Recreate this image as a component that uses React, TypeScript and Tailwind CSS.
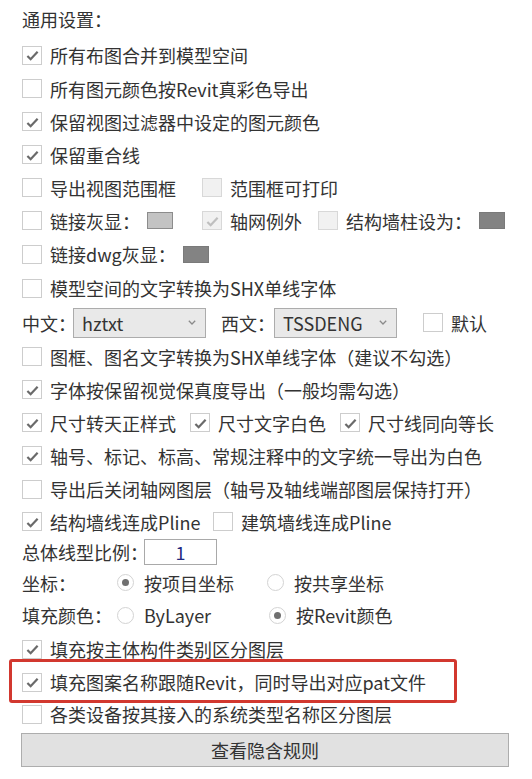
import clsx from 'clsx'
import type { ReactNode } from 'react'

const font = { fontFamily: '"Noto Sans CJK SC", "Noto Sans", sans-serif' }

function Box({ checked, disabled }: { checked?: boolean; disabled?: boolean }) {
    return (
        <span
            className={clsx(
                'flex h-[19px] w-[20px] shrink-0 items-center justify-center border',
                disabled ? 'border-[#d8d8d8] bg-[#f1f1f1]' : 'border-[#cdcdcd] bg-white',
            )}
        >
            {checked && (
                <svg viewBox="0 0 14 11" className="mt-px h-[11px] w-[13px]">
                    <path
                        d="M1.5 6 L5 9.5 L12.5 1.5"
                        fill="none"
                        stroke={disabled ? '#bfbfbf' : '#6a6a6a'}
                        strokeWidth="2.4"
                    />
                </svg>
            )}
        </span>
    )
}

function Check({
    label,
    checked,
    disabled,
    className,
    children,
}: {
    label: string
    checked?: boolean
    disabled?: boolean
    className?: string
    children?: ReactNode
}) {
    return (
        <div className={clsx('flex shrink-0 items-center', className)}>
            <Box checked={checked} disabled={disabled} />
            <span className="ml-[8px] whitespace-nowrap">{label}</span>
            {children}
        </div>
    )
}

function Radio({ label, checked, className }: { label: string; checked?: boolean; className?: string }) {
    return (
        <div className={clsx('flex shrink-0 items-center', className)}>
            <span className="flex size-[17px] items-center justify-center rounded-full border border-[#d3d3d3] bg-white">
                {checked && <span className="size-[7px] rounded-full bg-[#707070]" />}
            </span>
            <span className="ml-[10px] whitespace-nowrap">{label}</span>
        </div>
    )
}

function Swatch({ dark }: { dark?: boolean }) {
    return (
        <span
            className={clsx(
                'ml-[7px] h-[17px] w-[26px] shrink-0 border',
                dark ? 'border-[#7a7a7a] bg-[#838383]' : 'border-[#8c8c8c] bg-[#c3c3c3]',
            )}
        />
    )
}

function Select({ value, className }: { value: string; className?: string }) {
    return (
        <div
            className={clsx(
                'flex h-[30px] shrink-0 items-center justify-between border border-[#acacac] bg-[#e9e9e9] pl-[8px] pr-[9px]',
                className,
            )}
        >
            <span>{value}</span>
            <svg viewBox="0 0 8 5" className="h-[5px] w-[8px]">
                <path d="M0.8 0.8 L4 4 L7.2 0.8" fill="none" stroke="#8a8a8a" strokeWidth="1.3" />
            </svg>
        </div>
    )
}

export default function App() {
    return (
        <div className="min-h-screen bg-white pl-[22px] text-[18px] leading-none text-[#333]" style={font}>
            <div className="flex h-[38px] items-center">通用设置：</div>
            <div className="flex h-[34px] items-center">
                <Check label="所有布图合并到模型空间" checked />
            </div>
            <div className="flex h-[33px] items-center">
                <Check label="所有图元颜色按Revit真彩色导出" />
            </div>
            <div className="flex h-[33px] items-center">
                <Check label="保留视图过滤器中设定的图元颜色" checked />
            </div>
            <div className="flex h-[33px] items-center">
                <Check label="保留重合线" checked />
            </div>
            <div className="flex h-[33px] items-center">
                <Check label="导出视图范围框" className="w-[180px]" />
                <Check label="范围框可打印" disabled />
            </div>
            <div className="flex h-[33px] items-center">
                <Check label="链接灰显：" className="w-[180px]">
                    <Swatch />
                </Check>
                <Check label="轴网例外" checked disabled className="w-[116px]" />
                <Check label="结构墙柱设为：" disabled>
                    <Swatch dark />
                </Check>
            </div>
            <div className="flex h-[34px] items-center">
                <Check label="链接dwg灰显：">
                    <Swatch dark />
                </Check>
            </div>
            <div className="flex h-[34px] items-center">
                <Check label="模型空间的文字转换为SHX单线字体" />
            </div>
            <div className="flex h-[35px] items-center">
                <span className="w-[51px] shrink-0 whitespace-nowrap">中文：</span>
                <Select value="hztxt" className="w-[133px]" />
                <span className="ml-[15px] w-[53px] shrink-0 whitespace-nowrap">西文：</span>
                <Select value="TSSDENG" className="w-[123px]" />
                <Check label="默认" className="ml-[26px]" />
            </div>
            <div className="flex h-[33px] items-center">
                <Check label="图框、图名文字转换为SHX单线字体（建议不勾选）" />
            </div>
            <div className="flex h-[33px] items-center">
                <Check label="字体按保留视觉保真度导出（一般均需勾选）" checked />
            </div>
            <div className="flex h-[33px] items-center">
                <Check label="尺寸转天正样式" checked className="w-[168px]" />
                <Check label="尺寸文字白色" checked className="w-[150px]" />
                <Check label="尺寸线同向等长" checked />
            </div>
            <div className="flex h-[33px] items-center">
                <Check label="轴号、标记、标高、常规注释中的文字统一导出为白色" checked />
            </div>
            <div className="flex h-[34px] items-center">
                <Check label="导出后关闭轴网图层（轴号及轴线端部图层保持打开）" />
            </div>
            <div className="flex h-[31px] items-center">
                <Check label="结构墙线连成Pline" checked className="w-[191px]" />
                <Check label="建筑墙线连成Pline" />
            </div>
            <div className="flex h-[30px] items-center">
                <span className="w-[122px] shrink-0 whitespace-nowrap">总体线型比例：</span>
                <div className="flex h-[26px] w-[73px] items-center justify-center border border-[#a9a9a9] bg-white text-[#1f2a80]">
                    1
                </div>
            </div>
            <div className="flex h-[31px] items-center">
                <span className="w-[95px] shrink-0 whitespace-nowrap">坐标：</span>
                <Radio label="按项目坐标" checked className="w-[150px]" />
                <Radio label="按共享坐标" />
            </div>
            <div className="flex h-[34px] items-center">
                <span className="w-[95px] shrink-0 whitespace-nowrap">填充颜色：</span>
                <Radio label="ByLayer" className="w-[152px]" />
                <Radio label="按Revit颜色" checked />
            </div>
            <div className="flex h-[34px] items-center">
                <Check label="填充按主体构件类别区分图层" checked />
            </div>
            <div className="relative flex h-[32px] items-center">
                <Check label="填充图案名称跟随Revit，同时导出对应pat文件" checked />
                <div className="absolute left-[-13px] top-[-7px] h-[44px] w-[448px] rounded-[3px] border-[3px] border-[#d2382f]" />
            </div>
            <div className="flex h-[32px] items-center">
                <Check label="各类设备按其接入的系统类型名称区分图层" />
            </div>
            <button className="mt-[3px] flex h-[34px] w-[488px] -translate-x-px items-center justify-center border border-[#adadad] bg-[#e1e1e1] text-[#333]">
                查看隐含规则
            </button>
        </div>
    )
}
